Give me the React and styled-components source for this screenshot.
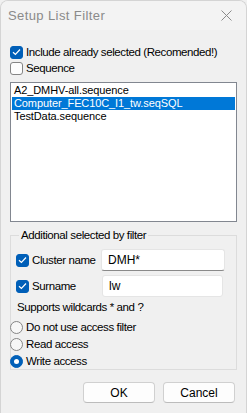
import { useState } from "react";
import styled, { createGlobalStyle } from "styled-components";

const Global = createGlobalStyle`
  html, body {
    margin: 0;
    padding: 0;
    background: #f0f0f0;
  }
  * { box-sizing: border-box; }
`;

const Window = styled.div`
  width: 247px;
  height: 413px;
  background: #f0f0f0;
  border: 1px solid #d4d4d4;
  border-bottom: none;
  border-radius: 8px 8px 0 0;
  overflow: hidden;
  font-family: "Liberation Sans", Arial, sans-serif;
  font-size: 11.5px;
  letter-spacing: -0.4px;
  color: #000;
  display: flex;
  flex-direction: column;
`;

const TitleBar = styled.div`
  height: 29px;
  background: #f3f3f3;
  display: flex;
  align-items: center;
  justify-content: space-between;
  padding: 0 0 0 7px;
`;

const Title = styled.span`
  font-size: 13px;
  letter-spacing: 0.4px;
  color: #8a8a8a;
`;

const Close = styled.div`
  width: 46px;
  height: 29px;
  display: flex;
  align-items: center;
  justify-content: center;
  padding-left: 6px;
`;

const Body = styled.div`
  flex: 1;
  padding: 14px 9px 0 9px;
  display: flex;
  flex-direction: column;
`;

const CheckRow = styled.label`
  display: flex;
  align-items: center;
  gap: 3px;
  height: 16px;
  white-space: nowrap;
`;

const Box = styled.span`
  width: 13px;
  height: 13px;
  border-radius: 3px;
  flex: none;
  display: flex;
  align-items: center;
  justify-content: center;
  background: ${(p) => (p.$on ? "#005fb8" : "#fdfdfd")};
  border: 1px solid ${(p) => (p.$on ? "#005fb8" : "#858585")};
`;

const List = styled.div`
  margin-top: 6px;
  height: 140px;
  background: #fff;
  border: 1px solid #828790;
  padding: 1px 1px;
  font-size: 11px;
  letter-spacing: -0.1px;
`;

const Item = styled.div`
  height: 13px;
  line-height: 13px;
  padding-left: 2px;
  white-space: nowrap;
  background: ${(p) => (p.$sel ? "#0078d7" : "transparent")};
  color: ${(p) => (p.$sel ? "#fff" : "#000")};
`;

const Group = styled.fieldset`
  margin: 7px 0 0 0;
  padding: 3px 10px 0 5px;
  height: 141px;
  border: 1px solid #dcdcdc;
  border-radius: 0;
  display: flex;
  flex-direction: column;
`;

const Legend = styled.legend`
  padding: 0 2px;
  margin-left: 3px;
`;

const FieldRow = styled.div`
  display: flex;
  align-items: center;
  height: 24px;
  margin-top: ${(p) => p.$mt || 0}px;
`;

const FieldLabel = styled(CheckRow)`
  width: 85px;
`;

const Input = styled.div`
  width: ${(p) => p.$w}px;
  height: 22px;
  background: #fff;
  border: 1px solid #e5e5e5;
  border-bottom: 1px solid ${(p) => (p.$focus ? "#8a8a8a" : "#e5e5e5")};
  border-radius: 3px;
  padding: 0 6px;
  display: flex;
  align-items: center;
  font-size: 12px;
  letter-spacing: 0;
  margin-left: ${(p) => p.$ml || 0}px;
`;

const Note = styled.div`
  margin: 1px 0 0 1px;
  height: 16px;
  line-height: 16px;
`;

const Radios = styled.div`
  margin: 4px 0 0 -6px;
  display: flex;
  flex-direction: column;
  gap: 1px;
`;

const RadioCircle = styled.span`
  width: 13px;
  height: 13px;
  border-radius: 50%;
  flex: none;
  background: ${(p) => (p.$on ? "#005fb8" : "#f7f7f7")};
  border: 1px solid ${(p) => (p.$on ? "#005fb8" : "#858585")};
  display: flex;
  align-items: center;
  justify-content: center;
  &::after {
    content: "";
    display: ${(p) => (p.$on ? "block" : "none")};
    width: 5px;
    height: 5px;
    border-radius: 50%;
    background: #fff;
  }
`;

const Buttons = styled.div`
  display: flex;
  justify-content: flex-end;
  gap: 8px;
  margin-top: 12px;
  padding-right: 2px;
`;

const Button = styled.button`
  width: 72px;
  height: 21px;
  background: #fdfdfd;
  border: 1px solid #d0d0d0;
  border-bottom-color: #bcbcbc;
  border-radius: 4px;
  font-family: "Liberation Sans", Arial, sans-serif;
  font-size: 12px;
  color: #000;
  padding: 0;
`;

const Tick = () => (
  <svg width="9" height="8" viewBox="0 0 9 8">
    <path d="M1 4.2 L3.4 6.5 L8 1.5" fill="none" stroke="#fff" strokeWidth="1.2" />
  </svg>
);

const Check = ({ on, children }) => (
  <CheckRow>
    <Box $on={on}>{on && <Tick />}</Box>
    {children}
  </CheckRow>
);

const items = ["A2_DMHV-all.sequence", "Computer_FEC10C_I1_tw.seqSQL", "TestData.sequence"];
const access = ["Do not use access filter", "Read access", "Write access"];

export default function App() {
  const [sel, setSel] = useState(1);
  const [mode, setMode] = useState(2);
  return (
    <>
      <Global />
      <Window>
        <TitleBar>
          <Title>Setup List Filter</Title>
          <Close>
            <svg width="11" height="11" viewBox="0 0 11 11">
              <path d="M0.5 0.5 L10.5 10.5 M10.5 0.5 L0.5 10.5" stroke="#8a8a8a" strokeWidth="1" />
            </svg>
          </Close>
        </TitleBar>
        <Body>
          <Check on>Include already selected (Recomended!)</Check>
          <Check on={false}>Sequence</Check>
          <List>
            {items.map((t, i) => (
              <Item key={t} $sel={i === sel} onClick={() => setSel(i)}>
                {t}
              </Item>
            ))}
          </List>
          <Group>
            <Legend>Additional selected by filter</Legend>
            <FieldRow $mt={4}>
              <FieldLabel>
                <Box $on><Tick /></Box>
                Cluster name
              </FieldLabel>
              <Input $w={124} $focus>DMH*</Input>
            </FieldRow>
            <FieldRow $mt={2}>
              <FieldLabel>
                <Box $on><Tick /></Box>
                Surname
              </FieldLabel>
              <Input $w={121} $ml={1}>lw</Input>
            </FieldRow>
            <Note>Supports wildcards * and ?</Note>
            <Radios>
              {access.map((t, i) => (
                <CheckRow key={t} onClick={() => setMode(i)}>
                  <RadioCircle $on={i === mode} />
                  {t}
                </CheckRow>
              ))}
            </Radios>
          </Group>
          <Buttons>
            <Button>OK</Button>
            <Button>Cancel</Button>
          </Buttons>
        </Body>
      </Window>
    </>
  );
}
